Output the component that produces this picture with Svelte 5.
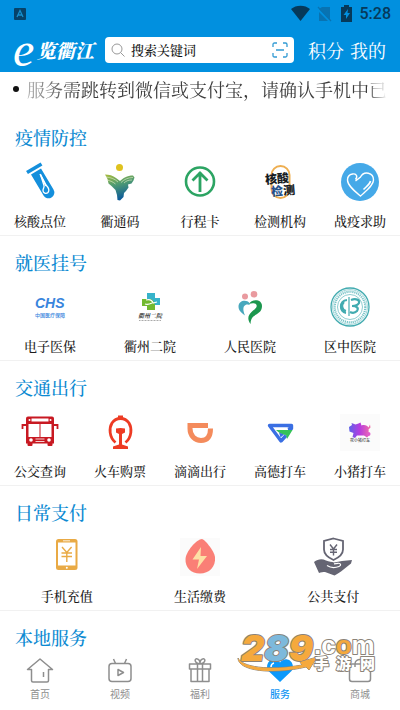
<script>
  let keyword = '';

  const sections = [
    {
      title: '疫情防控',
      items: [
        { icon: 'tube', label: '核酸点位' },
        { icon: 'hands', label: '衢通码' },
        { icon: 'travel', label: '行程卡' },
        { icon: 'testing', label: '检测机构' },
        { icon: 'help', label: '战疫求助' }
      ]
    },
    {
      title: '就医挂号',
      items: [
        { icon: 'chs', label: '电子医保' },
        { icon: 'hospital', label: '衢州二院' },
        { icon: 'people', label: '人民医院' },
        { icon: 'seal', label: '区中医院' }
      ]
    },
    {
      title: '交通出行',
      items: [
        { icon: 'bus', label: '公交查询' },
        { icon: 'train', label: '火车购票' },
        { icon: 'didi', label: '滴滴出行' },
        { icon: 'gaode', label: '高德打车' },
        { icon: 'pig', label: '小猪打车' }
      ]
    },
    {
      title: '日常支付',
      items: [
        { icon: 'phone', label: '手机充值' },
        { icon: 'energy', label: '生活缴费' },
        { icon: 'pay', label: '公共支付' }
      ]
    },
    { title: '本地服务', items: [] }
  ];

  const tabs = [
    { icon: 'home', label: '首页' },
    { icon: 'video', label: '视频' },
    { icon: 'gift', label: '福利' },
    { icon: 'service', label: '服务', active: true },
    { icon: 'shop', label: '商城' }
  ];
</script>

{#snippet serviceIcon(name)}
  <svg class="service-icon" viewBox="0 0 40 40" aria-hidden="true">
    {#if name === 'tube'}
      <path d="M7 11.5 21.5 3" stroke="#148fdc" stroke-width="3.6" />
      <path d="M11 13.500 21 7.500 33.500 28.500a5.800 5.800 0 0 1-10 6z" fill="#148fdc" />
      <path d="m20 13 6 12" stroke="#fff" stroke-width="1.4" />
      <path d="M20.500 13.500 26 24c3 3 4 5 2 7.500-2 2-5 .5-5-2 0-2 1.500-3 1-5z" stroke="#fff" stroke-width="1.3" fill="none" />
    {:else if name === 'hands'}
      <defs>
        <linearGradient id="hands" x1="0" y1="0" x2="0.3" y2="1">
          <stop offset="0" stop-color="#a9bd3c" />
          <stop offset="0.45" stop-color="#4f9b72" />
          <stop offset="1" stop-color="#0d5c9a" />
        </linearGradient>
      </defs>
      <circle cx="19.5" cy="6.6" r="3.5" fill="#dfc21e" />
      <path d="M5 13.5c4 0 8 1 11 3.5l4 3c3-3 7-5.500 13-5.500l1.500 2-1 3-2 3-3.500 1 .5 3-2.500 3.500-2 2-.5 4-3.500 3.500-2.500-.5-.5-5-1.500-5-4-4-3-2.500-1-4.500z" fill="url(#hands)" />
      <path d="M6 16c5 .5 9 2 12 5M7 19c4 1 6 2 8.500 4M33 16.500c-5 0-9 2-12 5M32 19c-4 0-6 1-8 3" stroke="#e7f0d0" stroke-width=".6" fill="none" />
    {:else if name === 'travel'}
      <circle cx="20" cy="20.5" r="14" stroke="#2ca463" stroke-width="2.6" fill="none" />
      <path d="M20 31V11M12.500 19.500 20 12l7.500 7.500" stroke="#2ca463" stroke-width="2.8" fill="none" />
    {:else if name === 'testing'}
      <rect x="11.5" y="5" width="18" height="32" rx="9" stroke="#eeae50" stroke-width="2" fill="#fff" />
      <g class="sans" font-weight="900" fill="#151a22">
        <text x="5" y="22" font-size="12" transform="rotate(-5 17 18)">核酸</text>
        <text x="11" y="34" font-size="12" transform="rotate(-5 23 29)"><tspan fill="#23518c">检</tspan>测</text>
      </g>
    {:else if name === 'help'}
      <circle cx="20" cy="21" r="19" fill="#45a9e8" />
      <path d="M15.500 18.500c3-4 0-6-3-5.500-3 .5-5 2.500-5 6 0 5.500 7 11 13 16 6-5.500 13-10.500 13-16 0-7.500-9.500-9.500-13-3L15.500 20" stroke="#fff" stroke-width="1.4" fill="none" />
      <path d="M30.500 20c-.5 3-3.500 5-7 8.500" stroke="#fff" stroke-width="1.6" fill="none" />
    {:else if name === 'chs'}
      <text x="5" y="22" font-size="14" font-weight="700" font-style="italic" font-family="Liberation Sans" fill="#3985dd">CHS</text>
      <text class="sans" x="5" y="31" font-size="5" font-weight="500" fill="#3985dd">中国医疗保障</text>
    {:else if name === 'hospital'}
      <path d="M17 7h8v5h5v7H19l-2-4z" fill="#37b3ca" />
      <path d="M12 13h6c4 0 6 1 7 6v5h-8v-4h-5z" fill="#72b92f" />
      <path d="M16 14c4-1 6 0 7 3l4-1M15 18c3 1 5 0 7-1" stroke="#fff" stroke-width="1.1" fill="none" />
      <text x="8" y="32" font-size="6" font-style="italic" font-weight="700" fill="#333">衢州二院</text>
      <path d="M9 34.500h22" stroke="#aaa" stroke-dasharray="1 .5" />
    {:else if name === 'people'}
      <circle cx="15" cy="10.5" r="3" fill="#e99a9f" />
      <circle cx="24" cy="8.3" r="3.3" fill="#e99a9f" />
      <path d="M19.500 17c-3-4-11-2.500-11 3.500 0 4 3 6.500 6.500 9-2-5-2.500-9 .5-10.500 2-1 3.500 0 4 0z" fill="#47a7bd" />
      <path d="M19 18c2-5 13-5.500 13 2 0 6-4.500 7.500-8 10-2 1.500-3.500 4-3.500 8-3.500-5-2.500-8.500 1-12 3-3 6-4 5-7-1-2.500-5-2-7.500-1z" fill="#1c974e" />
    {:else if name === 'seal'}
      <g stroke="#42abb0" fill="none">
        <circle cx="20" cy="21" r="19" stroke-width="1.3" />
        <circle cx="20" cy="21" r="17.4" stroke-width=".5" />
        <circle cx="20" cy="21" r="15.3" stroke-width="2.2" stroke-dasharray="1.2 .8" opacity=".7" />
        <circle cx="20" cy="21" r="12.5" stroke-width=".6" />
        <path d="M19 11v19" stroke-width="1.2" />
        <path d="M17 14c-8 1-8 12-1 13M14 16c-3 3-2 8 2 9" stroke-width="2" />
        <path d="M21 14c5-2 9 0 8 3-1 2-4 3-7 3 5 0 7 2 5 5-2 2-5 2-7 1" stroke-width="2.2" />
      </g>
    {:else if name === 'bus'}
      <path d="M8 5.500h24a2 2 0 0 1 2 2v25h-1.500V34a1 1 0 0 1-1 1h-3a1 1 0 0 1-1-1v-1.500h-15V34a1 1 0 0 1-1 1h-3a1 1 0 0 1-1-1v-1.500H6v-25a2 2 0 0 1 2-2z" fill="#c81922" />
      <path d="M11.500 7.500h17v3h-17zM8.500 13h11v13h-11zM20.500 13h11v13h-11z" fill="#fff" />
      <circle cx="9.5" cy="9" r="1" fill="#fff" />
      <circle cx="30.5" cy="9" r="1" fill="#fff" />
      <circle cx="11" cy="29" r="1.8" fill="#fff" />
      <circle cx="29" cy="29" r="1.8" fill="#fff" />
      <path d="M15.500 28h9M15.500 30.500h9" stroke="#fff" stroke-width=".8" />
      <path d="M6 14H2.500v4M34 14h3.500v4" stroke="#c81922" stroke-width="1.8" fill="none" />
    {:else if name === 'train'}
      <path d="M15.500 31.500C9 26 9 17 12 12c2-3 5-4.500 8.500-4.500S27 9 29 12c3 5 3 14-3.500 19.500" stroke="#ed3b24" stroke-width="2.8" fill="none" />
      <path d="M18 4.500h5V8h-5zM16 17.500q4.500-1 9 0v4l-3 1.500v10.500l6 2V38H13v-2.500l6-2V23l-3-1.500z" fill="#ed3b24" />
    {:else if name === 'didi'}
      <path d="M28 14.500H10v3c0 7.500 5 12 11 12s9.500-4 9.500-12" stroke="#f48b5c" stroke-width="5" fill="none" />
    {:else if name === 'gaode'}
      <path d="m28 18.500 3.500-1v-3h-22L21 30l5-5.500" stroke="#3a6fe3" stroke-width="3.4" stroke-linejoin="round" fill="none" />
      <path d="M16 19h16.500L27 28l-1-4c-4-.5-7-2-10-5z" fill="#34c25a" />
      <path d="m19 21.500 5 2-3.500 3z" fill="#3a6fe3" />
    {:else if name === 'pig'}
      <defs>
        <linearGradient id="pig">
          <stop offset="0" stop-color="#5c62e8" />
          <stop offset="0.5" stop-color="#b73be0" />
          <stop offset="1" stop-color="#f06fa8" />
        </linearGradient>
      </defs>
      <rect y="3" width="40" height="37" fill="#fbfbfb" />
      <path d="m9 16 3-2-.5-2 4 1.500 3-1 2-1 1 3c3-1 6 0 7 2l1.500-3 .5 3-2 2c.5 2 0 3-1 4l1.500 2-2 2-3-2h-7l-2 2.500-2.500-1 1-4-4-1.500z" fill="url(#pig)" />
      <circle cx="28.5" cy="23" r="2" fill="#e15acb" />
      <text class="sans" x="10" y="31" font-size="4" fill="#555">花小猪打车</text>
    {:else if name === 'phone'}
      <rect x="9" y="3" width="21.5" height="31" rx="2.5" fill="#e9aa45" />
      <path d="M11 6.500h17.500v23H11z" fill="#fff" />
      <path d="M16 4.800h7" stroke="#fff" stroke-width=".8" />
      <circle cx="19.8" cy="31.8" r="1" fill="#fff" />
      <path d="m15 11 4.800 5.500 4.800-5.500M19.800 16.500V26M14.500 17h10.500M14.500 20.500h10.500" stroke="#e9aa45" stroke-width="1.4" fill="none" />
    {:else if name === 'energy'}
      <rect y="2" width="40" height="38" fill="#fbfbfb" />
      <path d="M22 3c2 0 12 11 13 18 1 10-6 16.500-15 16.500S5 31.500 5.500 23C6 15 17 3 22 3z" fill="#fa7f76" />
      <path d="m21 11-8.500 12.500h6.500L17 33l10-13h-6.500z" fill="#fde0a5" />
    {:else if name === 'pay'}
      <path d="M20.500 2.500 30 5v8.500c0 5-4 8-9.500 10.500C15 21.500 11 18.500 11 13.500V5z" stroke="#656573" stroke-width="1.8" fill="#fff" />
      <path d="m17 8.500 3.500 4.500L24 8.500M20.500 13v6.500M17 13.500h7M17 16.200h7" stroke="#656573" stroke-width="1.4" fill="none" />
      <path d="M1 26c4-3 8-3.500 12-1.500 3 1.500 6 1 8 2l8-1.500 10-1-1 3.500-10 8c-2 1.500-4 2.500-6.500 4L12 36c-2 0-4 0-6 1z" fill="#656573" />
      <path d="M14 29.500c3 2 8 2.500 12 1 2.500-1 2-3.500-1-3.200l-4 .5" stroke="#fff" stroke-width="1.2" fill="none" />
    {/if}
  </svg>
{/snippet}

{#snippet tabIcon(name)}
  <svg class="tab-icon" viewBox="0 0 28 28" aria-hidden="true">
    {#if name === 'home'}
      <path d="M5.500 13.500H1.500L14 3l12.500 10.500h-4v11a1.500 1.500 0 0 1-1.500 1.500H7a1.500 1.500 0 0 1-1.500-1.500zM17.500 16v5" />
    {:else if name === 'video'}
      <rect x="3" y="7.500" width="22" height="18" rx="3" />
      <path d="m7.500 3 2 4.500M20.500 3l-2 4.500M12 13.500v6l5.500-3z" />
    {:else if name === 'gift'}
      <path d="M3.500 8h21v5h-21zM5 13v12.500h18V13M11.500 8v17.500M16.500 8v17.500M14 8c-6-1-6-6-2.500-5 2 .5 2.500 3 2.500 5 0-2 .5-4.500 2.500-5 3.500-1 3.500 4-2.500 5" />
    {:else if name === 'service'}
      <path class="solid" d="M14 26 2.500 15c-3-4-1-10.500 4-11.500 3-.6 5.500.5 7.500 3 2-2.500 4.500-3.600 7.500-3 5 1 7 7.500 4 11.500z" />
      <path class="shine" d="M5 11c0-2 1-3.500 3-4" />
    {:else if name === 'shop'}
      <path d="M3.500 8h21v15a2.500 2.500 0 0 1-2.500 2.500H6A2.500 2.500 0 0 1 3.500 23zM9 8c0-6 10-6 10 0v3M9 8v3" />
    {/if}
  </svg>
{/snippet}

<div class="app">
  <header>
    <div class="status">
      <svg class="app-badge" viewBox="0 0 12 12" aria-hidden="true">
        <rect width="12" height="12" rx="1" fill="#064269" />
        <path d="m3 9 3-6.500L9 9M4.200 7h3.600" stroke="#168fcd" stroke-width="1.3" fill="none" />
      </svg>
      <svg class="signals" viewBox="0 0 62 18" aria-hidden="true">
        <path d="M0 4c5-4.500 14-4.500 19 0L9.500 16z" fill="#06395a" />
        <path d="M31 2h8v13l-11-11zM28 7v9h9z" fill="#0873b2" />
        <path d="m27 2 13 14" stroke="#0873b2" stroke-width="1.2" />
        <path d="M53 0h5v2h3v15H50V2h3z" fill="#06395a" />
        <path d="M57 4 52.500 10H55v4l4-6h-2.500z" fill="#0190df" />
      </svg>
      <time>5:28</time>
    </div>
    <div class="toolbar">
      <a class="logo" href="/"><span>e</span>览衢江</a>
      <form class="search" on:submit|preventDefault>
        <svg viewBox="0 0 14 14" aria-hidden="true">
          <circle cx="6" cy="6" r="5" stroke="#999" fill="none" />
          <path d="m9.500 9.500 4 4" stroke="#999" />
        </svg>
        <input type="text" aria-label="搜索" placeholder="搜索关键词" bind:value={keyword} />
        <button type="button" aria-label="扫一扫">
          <svg viewBox="0 0 16 16" aria-hidden="true">
            <path d="M1 5V2.500Q1 1 2.500 1H5M11 1h2.500Q15 1 15 2.500V5M15 11v2.500q0 1.500-1.500 1.500H11M5 15H2.500Q1 15 1 13.500V11M4 8h8" stroke="#329bd3" stroke-width="1.3" fill="none" />
          </svg>
        </button>
      </form>
      <a href="/points">积分</a>
      <a href="/mine">我的</a>
    </div>
  </header>

  <div class="notice">
    <p>服务需跳转到微信或支付宝，请确认手机中已安装</p>
  </div>

  <main>
    {#each sections as section}
      <section>
        <h2>{section.title}</h2>
        {#if section.items.length}
          <div class="services">
            {#each section.items as item}
              <a href="/service/{item.icon}">
                {@render serviceIcon(item.icon)}
                <span>{item.label}</span>
              </a>
            {/each}
          </div>
        {/if}
      </section>
    {/each}
  </main>

  <nav>
    {#each tabs as tab}
      <a href="/{tab.icon}" class:active={tab.active}>
        {@render tabIcon(tab.icon)}
        <span>{tab.label}</span>
      </a>
    {/each}
    <svg class="watermark" viewBox="0 0 142 42" role="img" aria-label="289.com 手游网">
      <g stroke="#8b8378" stroke-width="2" paint-order="stroke" stroke-linejoin="round">
        <text x="5" y="29" font-family="Inter" font-weight="900" font-size="36" font-style="italic" fill="#f5a93d">2<tspan fill="#7db9dc">8</tspan>9</text>
        <path d="M2 26c4 9 30 13 64 7l-2-3 17-5-8 13-3-3c-34 8-68 4-68-9z" fill="#f5a93d" stroke-width="1" />
        <text x="78" y="22" font-family="Liberation Sans" font-weight="700" font-size="26" fill="#fff">.c<tspan fill="#f5a93d">o</tspan>m</text>
        <text class="sans" x="78 100 124" y="37" font-weight="900" font-size="15" fill="#fff">手游网</text>
      </g>
    </svg>
  </nav>
</div>

<style>
  :global(body) {
    margin: 0;
    background: #fff;
  }

  .app {
    display: flex;
    flex-direction: column;
    min-height: 100vh;
    color: #1c1c1c;
    font-family: "Noto Serif CJK SC", "Noto Sans CJK SC", sans-serif;
    overflow-x: clip;
  }

  a {
    color: inherit;
    text-decoration: none;
  }

  svg {
    display: block;
    flex: none;
    overflow: visible;
  }

  .sans {
    font-family: "Noto Sans CJK SC", sans-serif;
  }

  header {
    background: #0190df;
    color: #fff;
  }

  .status {
    display: flex;
    align-items: center;
    height: 28px;
    padding: 0 9px 0 14px;
    color: #06395a;
  }

  .app-badge {
    width: 12px;
    height: 12px;
    margin-right: auto;
  }

  .signals {
    width: 62px;
    height: 18px;
    margin-right: 7px;
  }

  time {
    font: 500 16px/20px Roboto, sans-serif;
  }

  .toolbar {
    display: flex;
    align-items: center;
    height: 44px;
    padding: 0 14px 0 13px;
    font-size: 18px;
    white-space: nowrap;
  }

  .logo {
    display: flex;
    align-items: center;
    margin-right: 11px;
    font-size: 19px;
    font-style: italic;
    font-weight: 900;
    line-height: 26px;
  }

  .logo span {
    width: 24px;
    font-family: "Liberation Serif", serif;
    font-size: 48px;
    font-weight: 400;
  }

  .search {
    display: flex;
    flex: 1;
    align-items: center;
    min-width: 0;
    height: 26px;
    margin-right: 14px;
    padding: 0 6px;
    box-sizing: border-box;
    border-radius: 4px;
    background: #fff;
  }

  .search svg {
    width: 14px;
    height: 14px;
  }

  .search input {
    flex: 1;
    min-width: 0;
    padding: 0 0 0 6px;
    border: 0;
    outline: 0;
    background: none;
    color: #111;
    font: 500 13px/20px "Noto Serif CJK SC", "Noto Sans CJK SC", sans-serif;
  }

  .search input::placeholder {
    color: #111;
    opacity: 1;
  }

  .search button {
    padding: 0;
    border: 0;
    background: none;
    cursor: pointer;
  }

  .search button svg {
    width: 16px;
    height: 16px;
  }

  .toolbar a:last-child {
    margin-left: 6px;
  }

  .notice {
    display: flex;
    align-items: center;
    gap: 8px;
    padding: 4px 13px 9px;
  }

  .notice::before {
    content: "";
    flex: none;
    width: 6px;
    height: 6px;
    border-radius: 50%;
    background: #111;
  }

  .notice p {
    flex: 1;
    margin: 0;
    overflow: hidden;
    color: #3c3c3c;
    font-size: 18px;
    line-height: 26px;
    white-space: nowrap;
    mask-image: linear-gradient(to right, rgba(0, 0, 0, 0.4), #000 50px, #000 calc(100% - 20px), transparent);
  }

  section {
    border-bottom: 1px solid #f1f1f1;
    padding: 16px 0 4px;
  }

  section:last-child {
    border: 0;
  }

  h2 {
    margin: 0;
    padding: 0 15px;
    color: #0c8ad2;
    font-size: 18px;
    font-weight: 500;
    line-height: 20px;
  }

  .services {
    display: grid;
    grid-auto-flow: column;
    grid-auto-columns: 1fr;
    margin-top: 14px;
  }

  .services a {
    display: flex;
    flex-direction: column;
    align-items: center;
    gap: 10px;
    font-size: 13px;
    font-weight: 500;
    line-height: 20px;
  }

  .service-icon {
    width: 40px;
    height: 40px;
  }

  nav {
    position: sticky;
    bottom: 0;
    display: grid;
    grid-template-columns: repeat(5, 1fr);
    margin-top: auto;
    padding: 1px 0 8px;
    background: #fff;
    color: #8e8e8e;
    font: 10px/16px "Noto Sans CJK SC", sans-serif;
  }

  nav a {
    display: flex;
    flex-direction: column;
    align-items: center;
    gap: 2px;
  }

  nav a.active {
    color: #1296f3;
    font-weight: 500;
  }

  .tab-icon {
    width: 28px;
    height: 28px;
    fill: none;
    stroke: currentColor;
    stroke-width: 1.5;
    stroke-linejoin: round;
  }

  .tab-icon .solid {
    fill: #0c99fb;
    stroke: none;
  }

  .tab-icon .shine {
    stroke: #fff;
  }

  .watermark {
    position: absolute;
    top: -23px;
    left: 59%;
    width: 142px;
    height: 42px;
    pointer-events: none;
  }
</style>
